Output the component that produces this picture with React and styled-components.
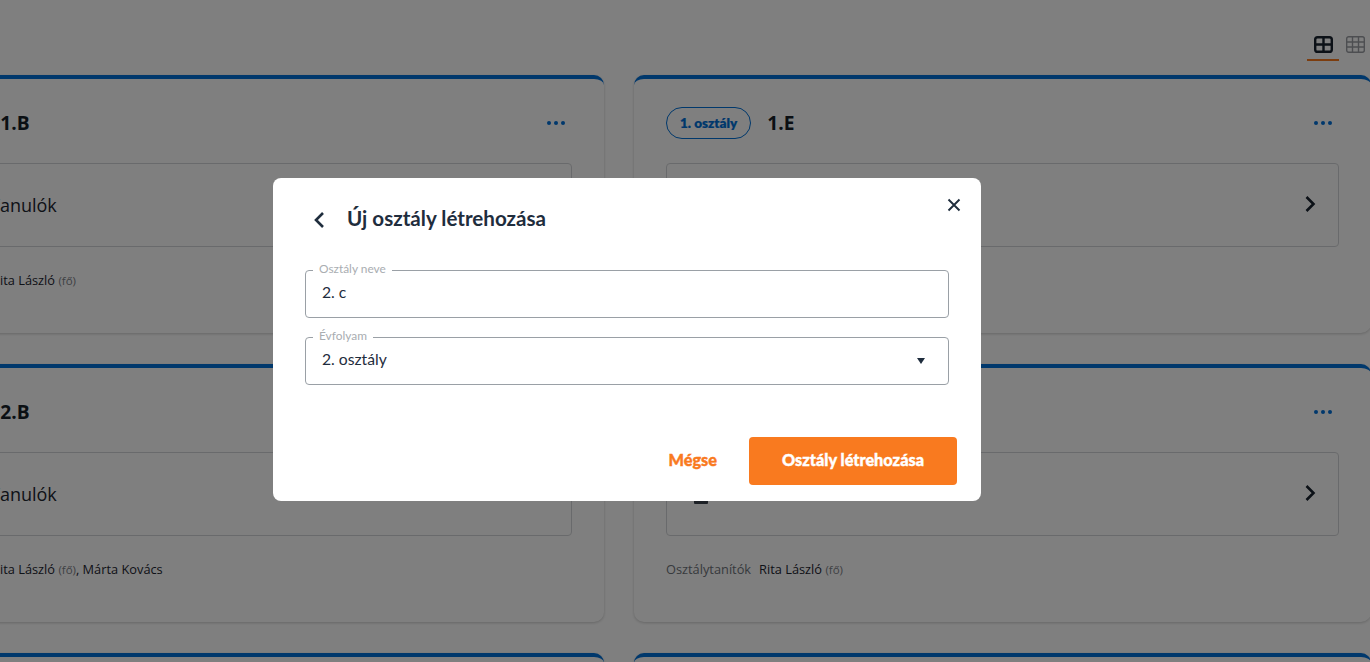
import React from "react";
import styled, { createGlobalStyle } from "styled-components";

const classes = [
  { grade: "1. osztály", name: "1.B", teachers: "Rita László", extra: "" },
  { grade: "1. osztály", name: "1.E", teachers: "Rita László", extra: "" },
  { grade: "2. osztály", name: "2.B", teachers: "Rita László", extra: "Márta Kovács" },
  { grade: "2. osztály", name: "2.E", teachers: "Rita László", extra: "" },
  { grade: "3. osztály", name: "3.B", teachers: "Rita László", extra: "" },
  { grade: "3. osztály", name: "3.E", teachers: "Rita László", extra: "" },
];

export default function App() {
  return (
    <>
      <GlobalStyle />
      <Page>
        <Toolbar>
          <ViewTab $active>
            <svg width="19" height="17" viewBox="0 0 19 17" fill="none" stroke="#18222e" strokeWidth="2.4">
              <rect x="1.2" y="1.2" width="16.6" height="14.6" rx="2.4" />
              <path d="M9.5 1v15M1 8.5h17" />
            </svg>
          </ViewTab>
          <ViewTab>
            <svg width="19" height="17" viewBox="0 0 19 17" fill="none" stroke="#9a9da3" strokeWidth="1.4">
              <rect x="0.7" y="0.7" width="17.6" height="15.6" rx="2" />
              <path d="M6.5 1v15M12.5 1v15M1 6h17M1 11h17" />
            </svg>
          </ViewTab>
        </Toolbar>
        <CardGrid>
          {classes.map((item) => (
            <ClassCard key={item.name}>
              <CardHeader>
                <GradePill>{item.grade}</GradePill>
                <ClassName>{item.name}</ClassName>
                <MoreDots>
                  <span />
                  <span />
                  <span />
                </MoreDots>
              </CardHeader>
              <StudentsBox>
                <svg width="14" height="20" viewBox="0 0 14 20" fill="#3a424d">
                  <circle cx="7" cy="5" r="4" />
                  <rect x="0" y="11" width="14" height="9" rx="1" />
                </svg>
                <StudentsLabel>Tanulók</StudentsLabel>
                <OpenChevron width="24" height="24" viewBox="0 0 24 24" fill="none" stroke="#18222e" strokeWidth="2.6">
                  <path d="M8.5 5l7 7-7 7" />
                </OpenChevron>
              </StudentsBox>
              <TeacherRow>
                <TeacherLabel>Osztálytanítók</TeacherLabel>
                <span>
                  {item.teachers} <MainMark>(fő)</MainMark>
                  {item.extra && `, ${item.extra}`}
                </span>
              </TeacherRow>
            </ClassCard>
          ))}
        </CardGrid>
      </Page>
      <Overlay>
        <Modal>
          <CloseButton>
            <svg width="14" height="14" viewBox="0 0 14 14" fill="none" stroke="#1f2d3d" strokeWidth="1.9">
              <path d="M1.5 1.5l11 11M12.5 1.5l-11 11" />
            </svg>
          </CloseButton>
          <ModalHeader>
            <BackChevron width="14" height="18" viewBox="0 0 14 18" fill="none" stroke="#1f2d3d" strokeWidth="2.6">
              <path d="M11 2L4 9l7 7" />
            </BackChevron>
            <ModalTitle>Új osztály létrehozása</ModalTitle>
          </ModalHeader>
          <Fields>
            <Field>
              <FieldLabel>Osztály neve</FieldLabel>
              <FieldValue>2. c</FieldValue>
            </Field>
            <Field>
              <FieldLabel>Évfolyam</FieldLabel>
              <FieldValue>2. osztály</FieldValue>
              <SelectArrow width="8" height="6" viewBox="0 0 8 6" fill="#1f2d3d">
                <path d="M0 0h8L4 6z" />
              </SelectArrow>
            </Field>
          </Fields>
          <ModalFooter>
            <CancelButton>Mégse</CancelButton>
            <SubmitButton>Osztály létrehozása</SubmitButton>
          </ModalFooter>
        </Modal>
      </Overlay>
    </>
  );
}

const GlobalStyle = createGlobalStyle`
  html, body {
    margin: 0;
    height: 100%;
    overflow: hidden;
    background: #fff;
  }
  * {
    box-sizing: border-box;
  }
`;

const Page = styled.div`
  width: 1504px;
  margin-left: -133px;
  font-family: "Open Sans", sans-serif;
`;
const Toolbar = styled.div`
  display: flex;
  justify-content: flex-end;
  padding-top: 30px;
  margin-bottom: 14px;
`;
const ViewTab = styled.div`
  width: 32px;
  height: 31px;
  padding-top: 6px;
  display: flex;
  justify-content: center;
  align-items: flex-start;
  border-bottom: 2px solid ${(p) => (p.$active ? "#f97a1f" : "transparent")};
`;
const CardGrid = styled.div`
  display: grid;
  grid-template-columns: 737px 737px;
  gap: 30px;
`;
const ClassCard = styled.div`
  height: 258px;
  margin-bottom: 1px;
  padding: 28px 32px 0;
  background: #fff;
  border-top: 4px solid #0070d8;
  border-radius: 10px;
  box-shadow: 0 1px 3px rgba(0, 0, 0, 0.2);
`;
const CardHeader = styled.div`
  display: flex;
  align-items: center;
  height: 32px;
`;
const GradePill = styled.div`
  height: 32px;
  padding: 0 13px;
  display: flex;
  align-items: center;
  border: 1px solid #0070d8;
  border-radius: 16px;
  color: #0070d8;
  font: 800 13.5px "Lato", sans-serif;
  -webkit-text-stroke: 0.2px #0070d8;
`;
const ClassName = styled.div`
  margin-left: 16px;
  padding-bottom: 1px;
  color: #161e28;
  font-size: 19.2px;
  font-weight: 700;
`;
const MoreDots = styled.div`
  margin-left: auto;
  margin-right: 7px;
  display: flex;
  gap: 3px;
  span {
    width: 4px;
    height: 4px;
    border-radius: 50%;
    background: #0070d8;
  }
`;
const StudentsBox = styled.div`
  height: 84px;
  margin-top: 24px;
  padding: 0 16px 0 27px;
  display: flex;
  align-items: center;
  border: 1px solid #d3d5d8;
  border-radius: 4px;
  color: #1c2530;
`;
const StudentsLabel = styled.div`
  margin-left: 49px;
  margin-right: auto;
  font-size: 18px;
`;
const OpenChevron = styled.svg`
  margin-bottom: 2px;
`;
const TeacherRow = styled.div`
  margin-top: 24px;
  display: flex;
  gap: 8px;
  color: #1c2530;
  font-size: 12.8px;
`;
const TeacherLabel = styled.span`
  color: #6f747b;
`;
const MainMark = styled.span`
  color: #7d8288;
  font-size: 11.5px;
`;
const Overlay = styled.div`
  position: fixed;
  inset: 0;
  background: rgba(0, 0, 0, 0.5);
`;
const Modal = styled.div`
  position: absolute;
  left: 273px;
  top: 178px;
  width: 708px;
  height: 323px;
  padding: 0 32px;
  background: #fff;
  border-radius: 8px;
  font-family: "Lato", sans-serif;
  color: #1f2d3d;
`;
const CloseButton = styled.div`
  position: absolute;
  top: 20px;
  right: 20px;
  line-height: 0;
`;
const ModalHeader = styled.div`
  height: 92px;
  padding: 0 0 10px 7px;
  display: flex;
  align-items: center;
  gap: 21px;
`;
const BackChevron = styled.svg`
  margin-top: 2px;
`;
const ModalTitle = styled.h2`
  margin: 0 0 2px;
  font-size: 20.6px;
  font-weight: 700;
`;
const Fields = styled.div`
  display: flex;
  flex-direction: column;
  gap: 19px;
`;
const Field = styled.div`
  position: relative;
  height: 48px;
  padding: 0 23px 5px 16px;
  display: flex;
  align-items: center;
  justify-content: space-between;
  border: 1px solid #9aa0a6;
  border-radius: 4px;
`;
const FieldLabel = styled.label`
  position: absolute;
  top: -9px;
  left: 7px;
  padding: 0 6px;
  background: #fff;
  color: #a9adb1;
  font-size: 11.9px;
  line-height: 14px;
`;
const FieldValue = styled.div`
  font-size: 15.7px;
`;
const SelectArrow = styled.svg`
  margin-top: 4px;
`;
const ModalFooter = styled.div`
  margin: 52px -8px 0 0;
  display: flex;
  justify-content: flex-end;
  align-items: center;
  gap: 32px;
`;
const CancelButton = styled.button`
  padding: 0 0 4px;
  border: 0;
  background: none;
  color: #f97a1f;
  font: 900 16.3px "Lato", sans-serif;
  -webkit-text-stroke: 0.4px #f97a1f;
`;
const SubmitButton = styled.button`
  width: 208px;
  height: 48px;
  padding: 0 0 4px;
  border: 0;
  border-radius: 4px;
  background: #f97a1f;
  color: #fff;
  font: 900 16.3px "Lato", sans-serif;
  -webkit-text-stroke: 0.4px #fff;
`;
